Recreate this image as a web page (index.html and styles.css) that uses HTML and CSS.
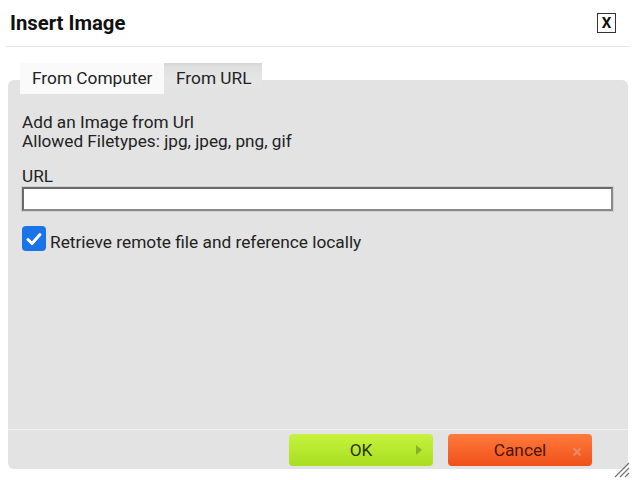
FILE: index.html
```html
<!DOCTYPE html>
<html>
<head>
<meta charset="utf-8">
<link rel="stylesheet" href="styles.css">
</head>
<body>
<div class="dialog">
  <div class="header">
    <h1 class="title">Insert Image</h1>
    <span class="close">X</span>
  </div>
  <div class="tabs">
    <div class="tab tab-active">From Computer</div>
    <div class="tab tab-url">From URL</div>
  </div>
  <div class="panel">
    <div class="content">
      <div class="intro">Add an Image from Url</div>
      <div class="intro">Allowed Filetypes: jpg, jpeg, png, gif</div>
      <label class="label">URL</label>
      <input class="url" type="text">
      <label class="check">
        <span class="box"><svg width="16" height="14" viewBox="0 0 16 14"><path d="M2 7.5 L6 11.5 L14 2.5" fill="none" stroke="#fff" stroke-width="3" stroke-linecap="round" stroke-linejoin="round"/></svg></span>
        <span class="check-text">Retrieve remote file and reference locally</span>
      </label>
    </div>
    <div class="footer">
      <button class="btn btn-ok">OK<span class="tri"></span></button>
      <button class="btn btn-cancel">Cancel<span class="x">×</span></button>
    </div>
  </div>
  <svg class="grip" width="18" height="18" viewBox="0 0 18 18">
    <path d="M17 3 L3 17 M17 8 L8 17 M17 13 L13 17" stroke="#777" stroke-width="1.3"/>
  </svg>
</div>
</body>
</html>
```

FILE: styles.css
```css
* { box-sizing: border-box; }
body {
  margin: 0;
  background: #fff;
  font-family: Roboto, "Liberation Sans", sans-serif;
  color: #222;
}
.dialog {
  position: relative;
  width: 637px;
  height: 480px;
}
.header {
  display: flex;
  align-items: center;
  justify-content: space-between;
  height: 47px;
  margin: 0 7px 0 6px;
  padding: 0 14px 0 4px;
  border-bottom: 1px solid #e6e6e6;
}
.title {
  margin: 0;
  font-size: 20.3px;
  font-weight: 700;
  color: #111;
}
.close {
  display: flex;
  align-items: center;
  justify-content: center;
  width: 19px;
  height: 20px;
  border: 1px solid #333;
  font-size: 15px;
  font-weight: 700;
  color: #111;
  margin-top: -1px;
}
.tabs {
  position: relative;
  z-index: 1;
  display: flex;
  margin-top: 16px;
  padding-left: 20px;
  height: 31px;
}
.tab {
  height: 31px;
  padding: 5px 0 0 12px;
  font-size: 17.3px;
  line-height: 20px;
  white-space: nowrap;
  color: #222;
}
.tab-active {
  background: #fafafa;
  width: 144px;
}
.tab-url {
  width: 98px;
  background: linear-gradient(#d4d4d4, #e0e0e0 4px, #e5e5e5 17px, #e3e3e3);
}
.panel {
  margin: -14px 9px 0 8px;
  background: #e3e3e3;
  border-radius: 6px;
  height: 389px;
  display: flex;
  flex-direction: column;
}
.content {
  flex: 1;
  padding: 32px 15px 0 14px;
  display: flex;
  flex-direction: column;
}
.intro {
  font-size: 17.2px;
  line-height: 20px;
  margin-bottom: -1px;
}
.label {
  margin-top: 16px;
  font-size: 17.2px;
  line-height: 20px;
}
.url {
  margin-top: 1px;
  width: 591px;
  height: 24px;
  border: 2px solid;
  border-color: #6a6a6a #8a8a8a #8a8a8a #6a6a6a;
  box-shadow: 0 0 0 1px #d0d0d0;
  background: #fff;
}
.check {
  margin-top: 15px;
  display: flex;
  align-items: flex-end;
  gap: 4px;
  font-size: 17.3px;
}
.box {
  width: 24px;
  height: 25px;
  border-radius: 4px;
  background: #1a73e8;
  display: flex;
  align-items: center;
  justify-content: center;
}
.check-text {
  line-height: 18px;
}
.footer {
  height: 40px;
  border-top: 1px solid #f2f2f2;
  display: flex;
  justify-content: flex-end;
  align-items: center;
  gap: 15px;
  padding: 0 36px 0 0;
}
.btn {
  position: relative;
  height: 32px;
  width: 144px;
  border: none;
  border-radius: 4px;
  font-family: Roboto, "Liberation Sans", sans-serif;
  font-size: 17.3px;
  padding: 0;
}
.btn-ok {
  background: linear-gradient(#c7f23f, #a8df1f);
  color: #2a3410;
}
.btn-cancel {
  background: linear-gradient(#ff7a3c, #f0501a);
  color: #4a1808;
}
.tri {
  position: absolute;
  right: 11px;
  top: 11px;
  width: 0;
  height: 0;
  border-left: 6px solid #86b22a;
  border-top: 5px solid transparent;
  border-bottom: 5px solid transparent;
}
.x {
  position: absolute;
  right: 10px;
  top: 7px;
  font-size: 18px;
  color: #e58b5c;
  font-weight: 700;
}
.grip {
  position: absolute;
  left: 612px;
  top: 460px;
}
```
